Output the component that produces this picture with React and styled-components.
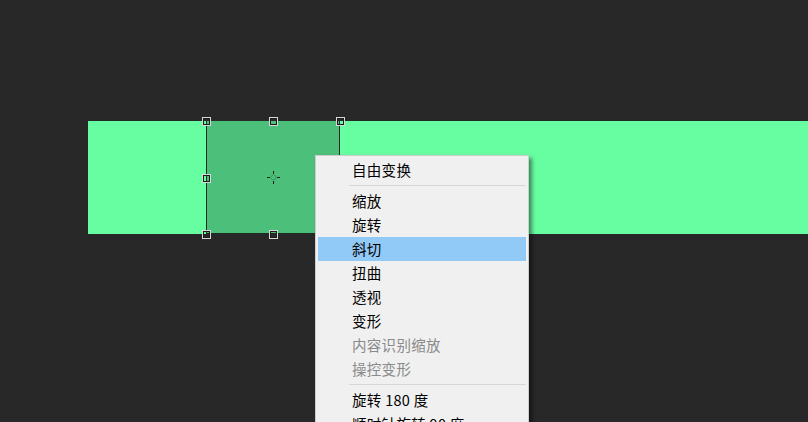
import React from 'react';
import styled, { createGlobalStyle } from 'styled-components';

const Global = createGlobalStyle`
  html, body {
    margin: 0;
    padding: 0;
    background: #282828;
    overflow: hidden;
  }
`;

const items = [
  { label: '自由变换' },
  { sep: true },
  { label: '缩放' },
  { label: '旋转' },
  { label: '斜切', active: true },
  { label: '扭曲' },
  { label: '透视' },
  { label: '变形' },
  { label: '内容识别缩放', disabled: true },
  { label: '操控变形', disabled: true },
  { sep: true },
  { label: '旋转 180 度' },
  { label: '顺时针旋转 90 度' },
  { label: '逆时针旋转 90 度' },
];

const handles = [
  [0, 0], [50, 0], [100, 0],
  [0, 50], [100, 50],
  [0, 100], [50, 100], [100, 100],
];

const App = () => {
  return (
    <Stage>
      <Global />
      <Band>
        <Selection>
          {handles.map(([x, y], i) => (
            <Handle key={i} style={{ left: `${x}%`, top: `${y}%` }} />
          ))}
          <Crosshair viewBox="0 0 13 13">
            <path d="M6.5 0v3M6.5 10v3M0 6.5h3M10 6.5h3" stroke="#1a1a1a" strokeWidth="1" />
            <circle cx="6.5" cy="6.5" r="2.5" fill="none" stroke="#3a9a5e" strokeWidth="1" />
          </Crosshair>
        </Selection>
      </Band>
      <Menu>
        {items.map((it, i) =>
          it.sep ? (
            <Separator key={i} />
          ) : (
            <Item key={i} $active={it.active} $disabled={it.disabled}>
              {it.label}
            </Item>
          )
        )}
      </Menu>
    </Stage>
  );
};

const Stage = styled.div`
  position: relative;
  width: 808px;
  height: 422px;
  padding-top: 121px;
  padding-left: 88px;
  box-sizing: border-box;
  overflow: hidden;
  font-family: "Noto Sans CJK SC", "Liberation Sans", sans-serif;
`;

const Band = styled.div`
  height: 113px;
  background: #67fea2;
  display: flex;
  padding-left: 118px;
`;

const Selection = styled.div`
  position: relative;
  width: 134px;
  height: 113px;
  background: #4cc07a;
  box-shadow: inset 1px 0 0 #1e2a22, inset -1px 0 0 #1e2a22, inset 0 -1px 0 #1e2a22;
  display: flex;
  align-items: center;
  justify-content: center;
`;

const Handle = styled.span`
  position: absolute;
  width: 7px;
  height: 7px;
  margin: -3px 0 0 -3px;
  box-sizing: border-box;
  border: 1px solid #1c1c1c;
  box-shadow: 0 0 0 1px #d8d8d8;
  background: transparent;
`;

const Crosshair = styled.svg`
  width: 13px;
  height: 13px;
`;

const Menu = styled.div`
  position: absolute;
  left: 315px;
  top: 155px;
  width: 214px;
  box-sizing: border-box;
  padding: 2px 2px;
  background: #f0f0f0;
  border: 1px solid #cdcdcd;
  box-shadow: 3px 3px 4px rgba(0, 0, 0, 0.45);
`;

const Item = styled.div`
  height: 24px;
  line-height: 24px;
  padding-left: 34px;
  font-size: 14.5px;
  letter-spacing: 0.3px;
  color: ${(p) => (p.$disabled ? '#8a8a8a' : '#000')};
  background: ${(p) => (p.$active ? '#91c9f7' : 'transparent')};
  white-space: nowrap;
`;

const Separator = styled.div`
  height: 1px;
  background: #d7d7d7;
  margin: 3px 0 3px 31px;
`;

export default App;
